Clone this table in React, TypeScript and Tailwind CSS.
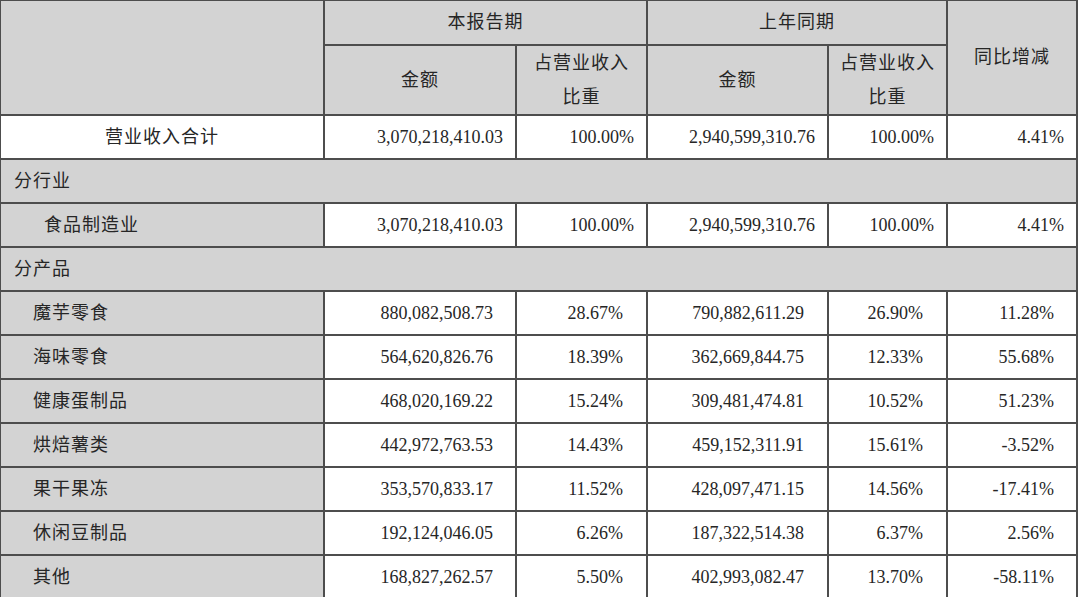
import React from "react"

type Row = {
    name: string
    amount: string
    ratio: string
    lastAmount: string
    lastRatio: string
    change: string
}

const products: Row[] = [
    { name: "魔芋零食", amount: "880,082,508.73", ratio: "28.67%", lastAmount: "790,882,611.29", lastRatio: "26.90%", change: "11.28%" },
    { name: "海味零食", amount: "564,620,826.76", ratio: "18.39%", lastAmount: "362,669,844.75", lastRatio: "12.33%", change: "55.68%" },
    { name: "健康蛋制品", amount: "468,020,169.22", ratio: "15.24%", lastAmount: "309,481,474.81", lastRatio: "10.52%", change: "51.23%" },
    { name: "烘焙薯类", amount: "442,972,763.53", ratio: "14.43%", lastAmount: "459,152,311.91", lastRatio: "15.61%", change: "-3.52%" },
    { name: "果干果冻", amount: "353,570,833.17", ratio: "11.52%", lastAmount: "428,097,471.15", lastRatio: "14.56%", change: "-17.41%" },
    { name: "休闲豆制品", amount: "192,124,046.05", ratio: "6.26%", lastAmount: "187,322,514.38", lastRatio: "6.37%", change: "2.56%" },
    { name: "其他", amount: "168,827,262.57", ratio: "5.50%", lastAmount: "402,993,082.47", lastRatio: "13.70%", change: "-58.11%" },
]

const cell = "border-2 border-[#4d4d4d] p-0"
const gray = "bg-[#d3d3d3]"
const cn = "tracking-[1px]"

export default function App() {
    return (
        <div
            className="w-[1080px] h-[597px] overflow-hidden bg-white text-[#262626] text-[18px]"
            style={{ fontFamily: '"Liberation Serif", "Noto Sans CJK SC", serif' }}
        >
            <table className="table-fixed border-collapse w-[1077px] -mt-px -ml-px">
                <colgroup>
                    <col className="w-[324px]" />
                    <col className="w-[192px]" />
                    <col className="w-[131px]" />
                    <col className="w-[181px]" />
                    <col className="w-[119px]" />
                    <col className="w-[130px]" />
                </colgroup>
                <thead>
                    <tr className="h-[45px]">
                        <td rowSpan={2} className={`${cell} ${gray}`} />
                        <td colSpan={2} className={`${cell} ${gray} text-center ${cn}`}>本报告期</td>
                        <td colSpan={2} className={`${cell} ${gray} text-center ${cn}`}>上年同期</td>
                        <td rowSpan={2} className={`${cell} ${gray} text-center ${cn}`}>同比增减</td>
                    </tr>
                    <tr className="h-[69px]">
                        <td className={`${cell} ${gray} text-center ${cn}`}>金额</td>
                        <td className={`${cell} ${gray} text-center leading-[34px] ${cn}`}>占营业收入<br />比重</td>
                        <td className={`${cell} ${gray} text-center ${cn}`}>金额</td>
                        <td className={`${cell} ${gray} text-center leading-[34px] ${cn}`}>占营业收入<br />比重</td>
                    </tr>
                </thead>
                <tbody>
                    <tr className="h-[44px]">
                        <td className={`${cell} text-center ${cn}`}>营业收入合计</td>
                        <td className={`${cell} text-right pr-3`}>3,070,218,410.03</td>
                        <td className={`${cell} text-right pr-3`}>100.00%</td>
                        <td className={`${cell} text-right pr-3`}>2,940,599,310.76</td>
                        <td className={`${cell} text-right pr-3`}>100.00%</td>
                        <td className={`${cell} text-right pr-3`}>4.41%</td>
                    </tr>
                    <tr className="h-[44px]">
                        <td colSpan={6} className={`${cell} ${gray} pl-[13px] ${cn}`}>分行业</td>
                    </tr>
                    <tr className="h-[44px]">
                        <td className={`${cell} ${gray} pl-[43px] ${cn}`}>食品制造业</td>
                        <td className={`${cell} text-right pr-3`}>3,070,218,410.03</td>
                        <td className={`${cell} text-right pr-3`}>100.00%</td>
                        <td className={`${cell} text-right pr-3`}>2,940,599,310.76</td>
                        <td className={`${cell} text-right pr-3`}>100.00%</td>
                        <td className={`${cell} text-right pr-3`}>4.41%</td>
                    </tr>
                    <tr className="h-[44px]">
                        <td colSpan={6} className={`${cell} ${gray} pl-[13px] ${cn}`}>分产品</td>
                    </tr>
                    {products.map((p) => (
                        <tr key={p.name} className="h-[44px]">
                            <td className={`${cell} ${gray} pl-[32px] ${cn}`}>{p.name}</td>
                            <td className={`${cell} text-right pr-[22px]`}>{p.amount}</td>
                            <td className={`${cell} text-right pr-[23px]`}>{p.ratio}</td>
                            <td className={`${cell} text-right pr-[23px]`}>{p.lastAmount}</td>
                            <td className={`${cell} text-right pr-[23px]`}>{p.lastRatio}</td>
                            <td className={`${cell} text-right pr-[22px]`}>{p.change}</td>
                        </tr>
                    ))}
                </tbody>
            </table>
        </div>
    )
}
